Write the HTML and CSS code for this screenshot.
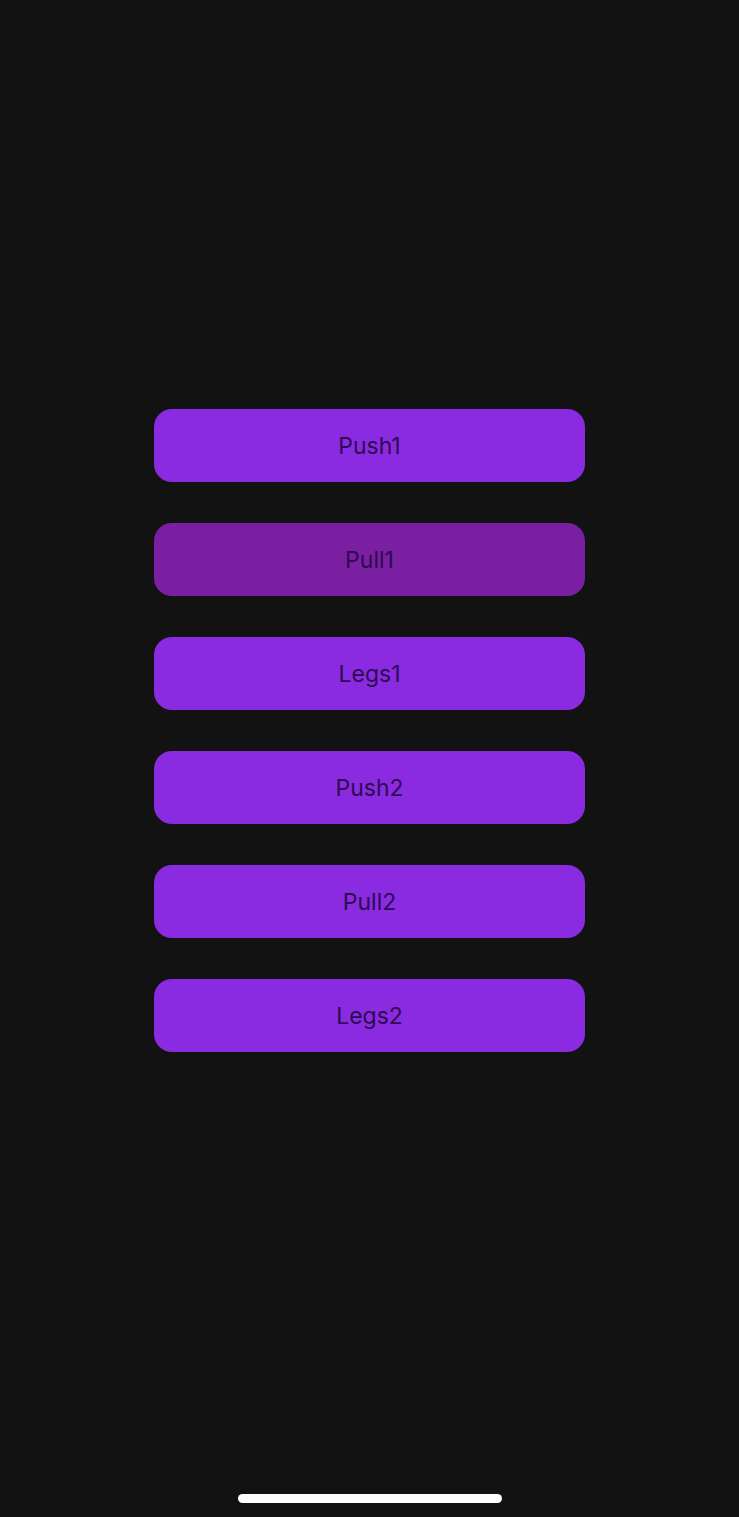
FILE: index.html
```html
<!DOCTYPE html>
<html>
<head>
<meta charset="utf-8">
<link rel="stylesheet" href="styles.css">
</head>
<body>
<div class="screen">
  <div class="list">
    <button class="btn">Push1</button>
    <button class="btn btn-active">Pull1</button>
    <button class="btn">Legs1</button>
    <button class="btn">Push2</button>
    <button class="btn">Pull2</button>
    <button class="btn">Legs2</button>
  </div>
  <div class="home-indicator"></div>
</div>
</body>
</html>
```
FILE: styles.css
```css
html, body {
  margin: 0;
  padding: 0;
  background: #121212;
}
.screen {
  width: 739px;
  height: 1517px;
  display: flex;
  flex-direction: column;
  align-items: center;
  background: #121212;
  box-sizing: border-box;
  padding-top: 409px;
}
.list {
  display: flex;
  flex-direction: column;
  gap: 41px;
  width: 431px;
}
.btn {
  height: 73px;
  border: none;
  border-radius: 18px;
  background: #8a2be2;
  color: #2e0a50;
  font-family: Inter, "Noto Sans", sans-serif;
  font-size: 23px;
  font-weight: 400;
  padding: 0;
  cursor: pointer;
}
.btn-active {
  background: #7a1fa2;
}
.home-indicator {
  margin-top: auto;
  margin-bottom: 14px;
  width: 264px;
  height: 9px;
  border-radius: 5px;
  background: #ffffff;
}
```
